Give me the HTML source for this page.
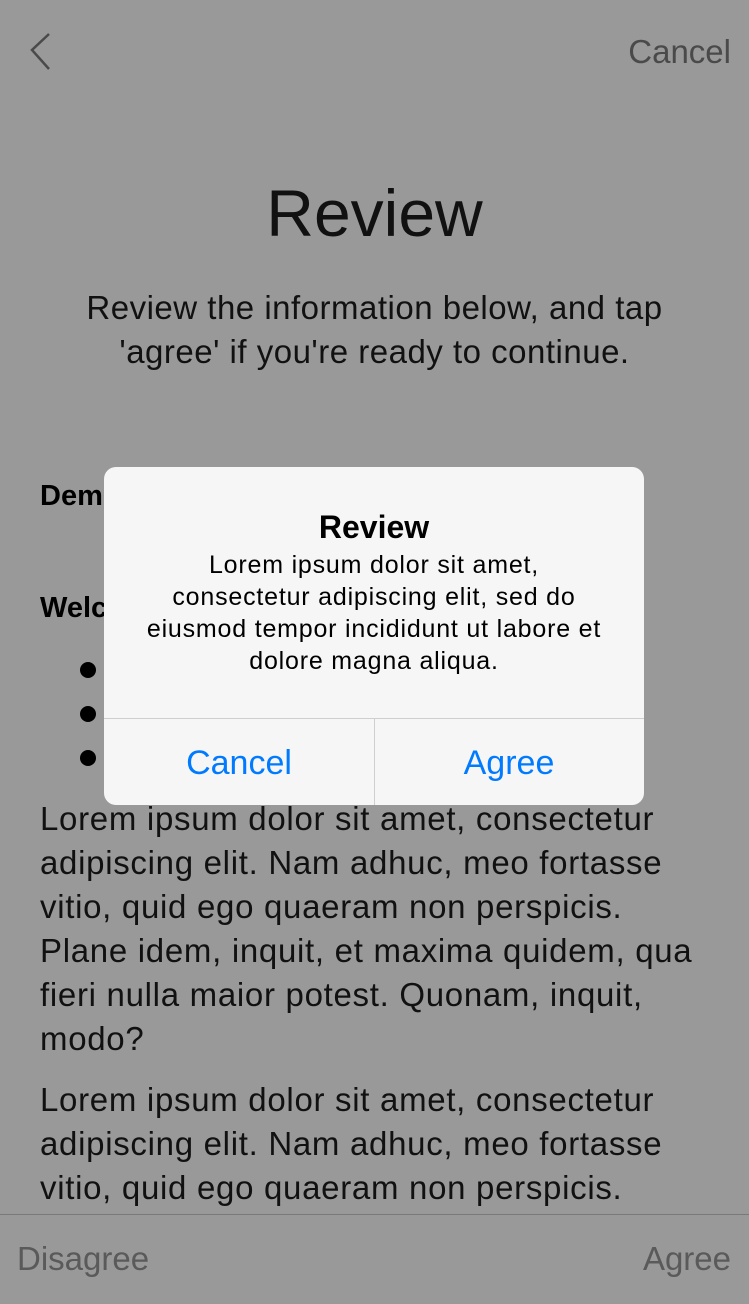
<!DOCTYPE html>
<html><head><style>
body{margin:0;width:749px;height:1303px;background:#999;font-family:"Liberation Sans",sans-serif;position:relative;overflow:hidden;color:#000}
.a{position:absolute;white-space:nowrap}
p{margin:0}
</style></head><body>
<svg class="a" style="left:28px;top:32px" width="30" height="40"><path d="M21 2 L4 18 L21 37" fill="none" stroke="#4a4a4a" stroke-width="2.5"/></svg>
<div class="a" style="right:18px;top:33px;font-size:33px;color:#4a4a4a">Cancel</div>
<div class="a" style="left:0;width:749px;text-align:center;top:175px;font-size:66px;font-weight:300;color:#111">Review</div>
<div class="a" style="left:0;width:749px;text-align:center;top:286px;font-size:33px;letter-spacing:0.5px;line-height:44px;color:#111">Review the information below, and tap<br>'agree' if you're ready to continue.</div>
<div class="a" style="left:40px;top:480px;font-size:29px;font-weight:bold">Demographics</div>
<div class="a" style="left:40px;top:592px;font-size:29px;font-weight:bold">Welcome</div>
<div class="a" style="left:80px;top:662px;width:16px;height:16px;border-radius:50%;background:#000"></div>
<div class="a" style="left:80px;top:706px;width:16px;height:16px;border-radius:50%;background:#000"></div>
<div class="a" style="left:80px;top:750px;width:16px;height:16px;border-radius:50%;background:#000"></div>
<div class="a" style="left:40px;top:797px;font-size:33px;letter-spacing:0.7px;line-height:44px;color:#111">Lorem ipsum dolor sit amet, consectetur<br>adipiscing elit. Nam adhuc, meo fortasse<br>vitio, quid ego quaeram non perspicis.<br>Plane idem, inquit, et maxima quidem, qua<br>fieri nulla maior potest. Quonam, inquit,<br>modo?</div>
<div class="a" style="left:40px;top:1078px;font-size:33px;letter-spacing:0.7px;line-height:44px;color:#111">Lorem ipsum dolor sit amet, consectetur<br>adipiscing elit. Nam adhuc, meo fortasse<br>vitio, quid ego quaeram non perspicis.</div>
<div class="a" style="left:0;top:1214px;width:749px;height:89px;background:#999;border-top:1px solid #7a7a7a"></div>
<div class="a" style="left:17px;top:1240px;font-size:33px;color:#5a5a5a">Disagree</div>
<div class="a" style="right:18px;top:1240px;font-size:33px;color:#5a5a5a">Agree</div>
<div class="a" style="left:104px;top:467px;width:540px;height:338px;background:#f6f6f6;border-radius:12px;overflow:hidden">
<div class="a" style="left:0;width:540px;text-align:center;top:42px;font-size:32px;font-weight:bold">Review</div>
<div class="a" style="left:0;width:540px;text-align:center;top:82px;font-size:25px;letter-spacing:0.8px;line-height:32px">Lorem ipsum dolor sit amet,<br>consectetur adipiscing elit, sed do<br>eiusmod tempor incididunt ut labore et<br>dolore magna aliqua.</div>
<div class="a" style="left:0;top:251px;width:540px;height:1px;background:#cfcfcf"></div>
<div class="a" style="left:270px;top:252px;width:1px;height:86px;background:#cfcfcf"></div>
<div class="a" style="left:0;width:270px;text-align:center;top:277px;font-size:34px;color:#007aff">Cancel</div>
<div class="a" style="left:270px;width:270px;text-align:center;top:277px;font-size:34px;color:#007aff">Agree</div>
</div>
</body></html>
